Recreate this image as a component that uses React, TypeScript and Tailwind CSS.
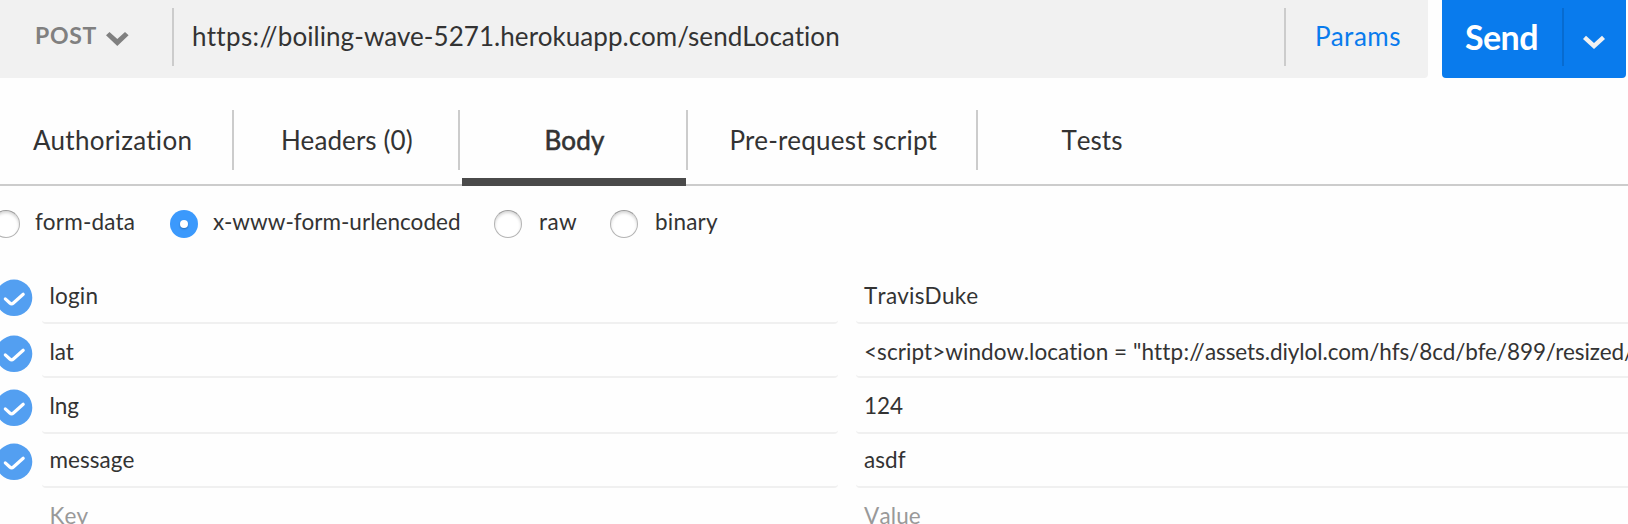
import React from "react";

function CheckIcon() {
  return (
    <svg className="ml-[-6px] h-10 w-10 shrink-0" viewBox="0 0 40 40">
      <circle cx="20" cy="19.8" r="18.3" fill="#539ff1" />
      <path
        d="M11.3 20.9L15.8 25Q17.6 26.6 19.4 25L29.2 16.2"
        fill="none"
        stroke="#fff"
        strokeWidth="3.2"
        strokeLinecap="round"
      />
    </svg>
  );
}

function Radio({ checked = false }: { checked?: boolean }) {
  return checked ? (
    <span className="flex h-7 w-7 shrink-0 items-center justify-center rounded-full bg-[#3b99fc]">
      <span className="h-2 w-2 rounded-full bg-white shadow-[0_1px_2px_rgba(0,0,0,0.3)]" />
    </span>
  ) : (
    <span className="h-7 w-7 shrink-0 rounded-full border border-[#b4b4b4] border-t-[#9c9c9c] bg-white shadow-[inset_0_2px_3px_rgba(0,0,0,0.16)]" />
  );
}

const tabs = [
  { label: "Authorization", box: "w-[234px] pl-[33px] tracking-[0.3px]" },
  { label: "Headers (0)", box: "w-[226px] pl-[47px] tracking-[0.1px]" },
  { label: "Body", box: "w-[228px] pl-[84.5px] tracking-[0.2px]", active: true },
  { label: "Pre-request script", box: "w-[290px] pl-[41.5px] tracking-[0.23px]" },
  { label: "Tests", box: "w-[228px] pl-[83.5px] [font-kerning:none]", last: true },
];

const rows = [
  { k: "login", v: "TravisDuke", box: "h-14 pt-[10px]", text: "tracking-[0.2px] [font-kerning:none]" },
  {
    k: "lat",
    v: (
      <>
        <span className="tracking-[0.07px]">{'<script>window.location = "'}</span>
        <span className="tracking-[0.2px]">http://</span>
        <span className="tracking-[-0.08px]">assets.diylol.com/hfs/8cd/bfe/899/resized/</span>
      </>
    ),
    box: "h-[54px] pt-[10px]",
    text: "",
  },
  { k: "lng", v: "124", box: "h-14 pt-[10px]", text: "" },
  { k: "message", v: "asdf", box: "h-[54px] pt-2", text: "tracking-[0.06px]" },
  { k: "Key", v: "Value", box: "h-14 pt-[10px]", text: "text-[#999] tracking-[0.15px] [font-kerning:none]", empty: true },
];

export default function App() {
  return (
    <div className="flex h-[524px] w-[1628px] flex-col overflow-hidden bg-[#fefefe] font-['Lato',sans-serif] text-[#333] [font-variant-ligatures:none]">
      <header className="flex h-[78px] shrink-0 leading-8">
        <div className="flex w-[1428px] rounded-br bg-[#f1f1f1] pt-2">
          <div className="flex h-[58px] w-[174px] border-r-2 border-[#ccc] pl-[35px] pt-[11px]">
            <span className="w-[71px] text-[23px] font-bold tracking-[0.7px] text-[#808080]">POST</span>
            <svg className="mt-[13px] h-[14px] w-[23px]" viewBox="0 0 23 14">
              <path d="M0 3.2L3.5 0L11.3 7L19 0L22.6 3.2L11.3 14Z" fill="#808080" />
            </svg>
          </div>
          <div className="w-[1110px] pl-[18px] pt-[12px] text-[26px]">
            <span className="tracking-[0.35px]">https://</span>
            <span className="tracking-[0.06px]">boiling-wave-5271.herokuapp.com/sendLocation</span>
          </div>
          <div className="h-[58px] border-l-2 border-[#ccc] pl-[29px] pt-[12px] text-[26px] tracking-[0.5px] text-[#097bed]">
            Params
          </div>
        </div>
        <div className="ml-[14px] flex w-[184px] rounded-b bg-[#097bed] pt-2 text-white">
          <div className="h-[58px] w-[122px] border-r-2 border-[#076bd0] pl-[23px] pt-[13px] text-[34px] font-bold tracking-[-0.6px]">
            Send
          </div>
          <svg className="ml-[19px] mt-[27px] h-[15px] w-[22px]" viewBox="0 0 22 15">
            <path d="M0 4L3 0.7L11 8L19 0.7L22 4L11 14Z" fill="#f1f1f1" />
          </svg>
        </div>
      </header>

      <nav className="mt-8 flex h-[76px] shrink-0 border-b-2 border-[#ccc] text-[26px] leading-8">
        {tabs.map((t) => (
          <div key={t.label} className={`relative h-[60px] shrink-0 pt-[14px] ${t.last ? "" : "border-r-2 border-[#ccc]"} ${t.box}`}>
            <span className={t.active ? "[-webkit-text-stroke:0.6px_#333]" : ""}>{t.label}</span>
            {t.active && <span className="absolute left-[2px] top-[68px] h-2 w-[224px] bg-[#4a4a4a]" />}
          </div>
        ))}
      </nav>

      <div className="ml-[-8px] mt-6 flex h-7 shrink-0 text-[22.5px] leading-7">
        <Radio />
        <span className="-mt-0.5 ml-[15px] w-[135px] tracking-[0.23px]">form-data</span>
        <Radio checked />
        <span className="-mt-0.5 ml-[15px] w-[281px] tracking-[0.04px]">x-www-form-urlencoded</span>
        <Radio />
        <span className="-mt-0.5 ml-[17px] w-[71px] tracking-[0.4px]">raw</span>
        <Radio />
        <span className="-mt-0.5 ml-[17px] tracking-[0.2px]">binary</span>
      </div>

      <main className="mt-[30px] text-[22.5px] leading-8">
        {rows.map((r) => (
          <div key={r.k} className={`flex ${r.box} ${r.text}`}>
            <div className="w-[42px] shrink-0">{!r.empty && <CheckIcon />}</div>
            <div className="w-[796px] shrink-0 rounded border-b-2 border-[#f0f0f0] pl-[7.5px] pt-0.5">{r.k}</div>
            <div className="ml-[18px] w-[800px] shrink-0 whitespace-nowrap rounded border-b-2 border-[#f0f0f0] pl-2 pt-0.5">{r.v}</div>
          </div>
        ))}
      </main>
    </div>
  );
}
